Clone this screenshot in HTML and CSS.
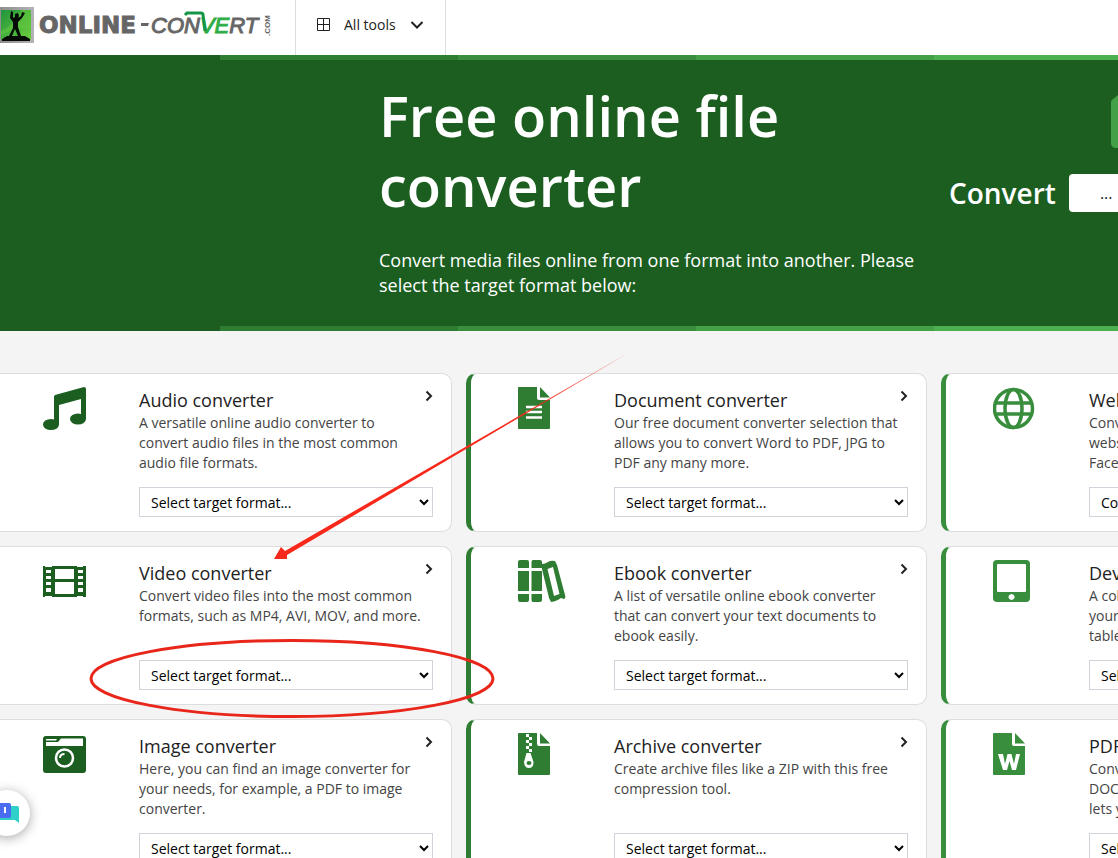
FILE: index.html
```html
<!DOCTYPE html>
<html lang="en">
<head>
<meta charset="utf-8">
<title>Online-Convert</title>
<link rel="stylesheet" href="styles.css">
</head>
<body>
<header class="topbar">
  <a class="brand" href="#" aria-label="Online-Convert.com">
    <svg width="274" height="38" viewBox="0 0 274 38">
      <defs>
        <linearGradient id="tile" x1="0" y1="0" x2="1" y2="1"><stop offset="0" stop-color="#20943c"/><stop offset="1" stop-color="#6fd03f"/></linearGradient>
        <linearGradient id="frame"><stop offset="0" stop-color="#8d8d8d"/><stop offset="1" stop-color="#b4b4b8"/></linearGradient>
        <linearGradient id="leaf" x1="0" y1="0" x2="1" y2="0"><stop offset="0" stop-color="#109447"/><stop offset="1" stop-color="#4cc443"/></linearGradient>
      </defs>
      <path d="M0 0h34v36H0z" fill="url(#frame)"/>
      <path d="M1 3h30v30H1z" fill="url(#tile)"/>
      <path d="M1 24C10 20 18 13 21 3h10v18C20 20 12 23 1 28z" fill="#62c83d" opacity=".55"/>
      <path d="M11 4l2 1 0 6 2-1 0-3 3-1 1 3-1 2 3-2 1-4 3 1-3 5-4 4v5l3 9h4l5 3v2H2v-2l5-3h2l4-8V15l-3-4z" fill="#050b05"/>
      <path d="M15 22l-3 7h6z" fill="#47b53c"/>
      <text class="logo-bold" x="39" y="26">ONLINE</text>
      <path d="M141 16h8l-1 3h-7z" fill="#666"/>
      <text class="logo-italic" x="151" y="26">CON<tspan fill="url(#leaf)" stroke="#2bab45">VE</tspan>RT</text>
      <path d="M185 8l2-2h14q2 0 2 2l2 16" fill="none" stroke="#159647" stroke-width="3"/>
      <text class="logo-small" transform="translate(270 29) rotate(-90)">.COM</text>
    </svg>
  </a>
  <button class="tools" type="button">
    <svg width="13" height="13" viewBox="0 0 13 13" fill="none" stroke="#222"><path d="M.5.5h12v12H.5zM6.500.5v12M.5 6.500h12"/></svg>
    <span>All tools</span>
    <svg width="14" height="8" viewBox="0 0 14 8" fill="none" stroke="#222" stroke-width="2"><path d="M1.500 1L7 6.500 12.500 1"/></svg>
  </button>
</header>

<section class="hero">
  <div class="stripes"><i></i><i></i><i></i><i></i></div>
  <div class="hero-body">
    <div class="intro">
      <h1>Free online file converter</h1>
      <p>Convert media files online from one format into another. Please select the target format below:</p>
    </div>
    <div class="quick">
      <svg class="hex" width="60" height="53" viewBox="0 0 60 53"><path d="M0 7q0-1 1-2L7 0h46l7 5v43q0 5-5 5H5q-5 0-5-5z" fill="#43a047"/></svg>
      <div class="quick-row"><span id="quick-label">Convert</span><button type="button" class="quick-pick" aria-labelledby="quick-label">...</button></div>
    </div>
  </div>
  <div class="stripes"><i></i><i></i><i></i><i></i></div>
</section>

<main class="cards">
  <article class="card dark">
    <svg class="icon" viewBox="0 0 48 44"><path d="M11 10q0-1 1-2L41 0q2 0 2 2v30H38V12L16 18v20h-5z"/><ellipse cx="8" cy="37.500" rx="8" ry="5.500"/><ellipse cx="35" cy="32" rx="8" ry="5.500"/></svg>
    <div class="info">
      <h2><label for="f1">Audio converter</label></h2>
      <p>A versatile online audio converter to convert audio files in the most common audio file formats.</p>
      <select id="f1"><option>Select target format...</option></select>
    </div>
    <a class="go" href="#" aria-label="Audio"><svg viewBox="0 0 8 12"><path d="M1.500 1.500L6 6l-4.500 4.500"/></svg></a>
  </article>
  <article class="card mid">
    <svg class="icon" viewBox="0 0 48 44"><path d="M1 0h18v11q0 2 2 2h11v28q0 1-1 1H1q-1 0-1-1V1q0-1 1-1zM22 0l10 10.500H22z"/><path d="M8 20h16M8 25h16M8 30.500h16" stroke="#fff" stroke-width="2.500"/></svg>
    <div class="info">
      <h2><label for="f2">Document converter</label></h2>
      <p>Our free document converter selection that allows you to convert Word to PDF, JPG to PDF any many more.</p>
      <select id="f2"><option>Select target format...</option></select>
    </div>
    <a class="go" href="#" aria-label="Document"><svg viewBox="0 0 8 12"><path d="M1.500 1.500L6 6l-4.500 4.500"/></svg></a>
  </article>
  <article class="card light">
    <svg class="icon" viewBox="0 0 48 44"><g fill="none" stroke="currentColor" stroke-width="3.500"><circle cx="20.500" cy="21.500" r="19"/><ellipse cx="20.500" cy="21.500" rx="8.500" ry="19"/><path d="M3 16h35M3 27h35"/></g></svg>
    <div class="info">
      <h2><label for="f3">Webservice</label></h2>
      <p>Convert<br>webservices<br>Facebook</p>
      <select id="f3"><option>Convert</option></select>
    </div>
  </article>

  <article class="card dark">
    <svg class="icon" viewBox="0 0 48 44"><path fill-rule="evenodd" d="M0 6h2v1h7V6h25v1h6V6h3v31h-3v-1h-6v1H9v-1H2v1H0zM12 9v10h19V9zM12 22v12h19V22zM3 10v3h5v-3zM3 16v3h5v-3zM3 22v3h5v-3zM3 28v4h5v-4zM35 10v3h5v-3zM35 16v3h5v-3zM35 22v3h5v-3zM35 28v4h5v-4z"/></svg>
    <div class="info">
      <h2><label for="f4">Video converter</label></h2>
      <p>Convert video files into the most common formats, such as MP4, AVI, MOV, and more.</p>
      <select id="f4"><option>Select target format...</option></select>
    </div>
    <a class="go" href="#" aria-label="Video"><svg viewBox="0 0 8 12"><path d="M1.500 1.500L6 6l-4.500 4.500"/></svg></a>
  </article>
  <article class="card mid">
    <svg class="icon" viewBox="0 0 48 44"><path d="M2 0h7q2 0 2 2v6H0V2q0-2 2-2zM0 11h11v20H0zM0 34h11v6q0 2-2 2H2q-2 0-2-2zM15 0h7q2 0 2 2v6H13.500V2q0-2 1.500-2zM13.500 11H24v20H13.500zM13.500 34H24v6q0 2-2 2h-7q-1.500 0-1.500-2z"/><path fill-rule="evenodd" d="M24 4q3 0 6-2 3-2 7-1l2 4 8 30q1 3-1 4l-3-1q-4 3-7 3.500l-3 .5-2-4-7-29zM29.500 9l6.500 27 5.500-2L35 7z"/></svg>
    <div class="info">
      <h2><label for="f5">Ebook converter</label></h2>
      <p>A list of versatile online ebook converter that can convert your text documents to ebook easily.</p>
      <select id="f5"><option>Select target format...</option></select>
    </div>
    <a class="go" href="#" aria-label="Ebook"><svg viewBox="0 0 8 12"><path d="M1.500 1.500L6 6l-4.500 4.500"/></svg></a>
  </article>
  <article class="card light">
    <svg class="icon" viewBox="0 0 48 44"><path fill-rule="evenodd" d="M4 0h29q4 0 4 4v34q0 4-4 4H4q-4 0-4-4V4q0-4 4-4zM5 4q-1 0-1 1v26q0 1 1 1h27q1 0 1-1V5q0-1-1-1zM18.500 34a3 3 0 1 0 .1 0z"/></svg>
    <div class="info">
      <h2><label for="f6">Device</label></h2>
      <p>A collection<br>your<br>tablet</p>
      <select id="f6"><option>Select target format...</option></select>
    </div>
  </article>

  <article class="card dark">
    <svg class="icon" viewBox="0 0 48 44"><rect y="3" width="43" height="37" rx="3"/><path d="M3 9h12l3-3.500h22V13H3zM3 6h11l-1 1.500H3z" fill="#fff"/><circle cx="21.500" cy="25" r="8.500" fill="none" stroke="#fff" stroke-width="2.500"/><path d="M17 25q0-4 4.500-4" fill="none" stroke="#fff" stroke-width="2"/></svg>
    <div class="info">
      <h2><label for="f7">Image converter</label></h2>
      <p>Here, you can find an image converter for your needs, for example, a PDF to image converter.</p>
      <select id="f7"><option>Select target format...</option></select>
    </div>
    <a class="go" href="#" aria-label="Image"><svg viewBox="0 0 8 12"><path d="M1.500 1.500L6 6l-4.500 4.500"/></svg></a>
  </article>
  <article class="card mid">
    <svg class="icon" viewBox="0 0 48 44"><path d="M1 0h18v11q0 2 2 2h11v28q0 1-1 1H1q-1 0-1-1V1q0-1 1-1zM22 0l10 10.500H22z"/><path d="M8 1h3v3H8zM11 4h3v3h-3zM8 7h3v3H8zM11 10h3v3h-3zM8 13h3v3H8zM11 16h3v3h-3zM8.500 20h4L15.500 29q0 6-4.500 6t-5-6z" fill="#fff"/><ellipse cx="11" cy="30" rx="2.500" ry="2"/></svg>
    <div class="info">
      <h2><label for="f8">Archive converter</label></h2>
      <p>Create archive files like a ZIP with this free compression tool.</p>
      <select id="f8"><option>Select target format...</option></select>
    </div>
    <a class="go" href="#" aria-label="Archive"><svg viewBox="0 0 8 12"><path d="M1.500 1.500L6 6l-4.500 4.500"/></svg></a>
  </article>
  <article class="card light">
    <svg class="icon" viewBox="0 0 48 44"><path d="M1 0h18v11q0 2 2 2h11v28q0 1-1 1H1q-1 0-1-1V1q0-1 1-1zM22 0l10 10.500H22z"/><path d="M5 21h5l2 10 2.500-10h4L21 31l2-10h4l-4 16h-4l-2.500-9L14 37h-4z" fill="#fff"/></svg>
    <div class="info">
      <h2><label for="f9">PDF to</label></h2>
      <p>Convert<br>DOCX<br>lets you</p>
      <select id="f9"><option>Select target format...</option></select>
    </div>
  </article>
</main>

<button class="chat" type="button" aria-label="Chat">
  <svg width="28" height="20" viewBox="0 0 28 20"><path d="M8 3h18q2 0 2 2v15l-4-3H8z" fill="#2fd0c8"/><rect width="20" height="15" rx="2" fill="#4a6cf0"/><path d="M13 4h2v6h-2z" fill="#fff"/></svg>
</button>

<svg class="marks" width="1118" height="858" viewBox="0 0 1118 858">
  <defs><linearGradient id="fade" gradientUnits="userSpaceOnUse" x1="628" y1="353" x2="500" y2="428"><stop offset="0" stop-color="#e8261a" stop-opacity=".6"/><stop offset="1" stop-color="#f8281a"/></linearGradient></defs>
  <path d="M630 352L287 555L287 559L274 559L281 547L285 551Z" fill="url(#fade)"/>
  <ellipse cx="292" cy="678.500" rx="201" ry="38" fill="none" stroke="#e8261a" stroke-width="3"/>
</svg>
</body>
</html>
```
FILE: styles.css
```css
* { box-sizing: border-box; }
body {
  margin: 0;
  position: relative;
  height: 100vh;
  overflow: hidden;
  background: #f4f4f4;
  color: #222;
  font-family: "Open Sans", "Noto Sans", sans-serif;
}
h1, h2, p { margin: 0; }
button { font-family: inherit; color: inherit; border: 0; padding: 0; cursor: pointer; }

.topbar { display: flex; height: 55px; background: #fff; }
.brand { width: 295px; padding-top: 7px; }
.brand svg { display: block; }
.logo-bold { font: bold 23px "DejaVu Sans", sans-serif; fill: #666; stroke: #666; stroke-width: 1px; }
.logo-italic { font: italic 22px "Liberation Sans", sans-serif; fill: #666; stroke: #666; stroke-width: 1px; }
.logo-small { font: bold 8px "Liberation Sans", sans-serif; fill: #666; }
.tools {
  display: flex;
  align-items: center;
  gap: 14px;
  padding: 0 21px 6px;
  background: #fff;
  border: solid #ddd;
  border-width: 0 1px;
  font-size: 14px;
}

.hero { background: #1b5e20; }
.stripes { display: flex; height: 5px; padding-left: 220px; }
.stripes i { flex: 0 0 238px; background: #2e7d32; }
.stripes i:nth-child(2) { background: #388e3c; }
.stripes i:nth-child(3) { background: #43a047; }
.stripes i:nth-child(4) { background: #4caf50; }
.hero-body {
  display: flex;
  gap: 24px;
  height: 266px;
  padding: 20px 0 0 379px;
  color: #fff;
  overflow: hidden;
}
.intro { flex: 0 0 546px; }
.intro h1 { font-size: 56px; line-height: 70px; font-weight: 600; }
.intro p { margin-top: 28px; font-size: 18px; line-height: 25px; }
.quick { flex: none; padding-top: 15px; }
.hex { display: block; margin-left: 162px; }
.quick-row { display: flex; align-items: center; gap: 13px; margin-top: 26px; font-size: 28px; line-height: 38px; font-weight: 600; }
.quick-pick { width: 130px; height: 38px; padding-left: 31px; text-align: left; border-radius: 4px; background: #fff; color: #222; font-size: 16px; }

.cards {
  display: grid;
  grid-template-columns: repeat(3, 461px);
  grid-auto-rows: 159px;
  gap: 14px;
  margin: 42px 0 0 -9px;
}
.card {
  display: flex;
  padding: 13px 18px 0 47px;
  background: #fff;
  border: 1px solid #ddd;
  border-left: 5px solid;
  border-radius: 10px;
  position: relative;
}
.dark { border-left-color: #1b5e20; }
.mid { border-left-color: #2e7d32; }
.light { border-left-color: #388e3c; }
.icon { flex: none; width: 48px; height: 44px; margin-right: 48px; fill: currentColor; }
.dark .icon { color: #1b5e20; }
.mid .icon { color: #2e7d32; }
.light .icon { color: #388e3c; }
.info { flex: 1; display: flex; flex-direction: column; padding-bottom: 14px; }
.info h2 { font-size: 18px; line-height: 26px; font-weight: 500; }
.info p { flex: 1; padding-right: 8px; font-size: 14px; line-height: 20px; color: #444; }
.info select {
  width: 100%;
  height: 30px;
  padding-left: 7px;
  background: #fff;
  border: 1px solid #ced4da;
  border-radius: 0;
  color: #000;
  font: 14px "Open Sans", sans-serif;
}
.go { position: absolute; top: 16px; right: 18px; line-height: 0; }
.go svg { width: 8px; height: 12px; fill: none; stroke: #222; stroke-width: 2; }

.chat {
  position: absolute;
  left: -16px;
  bottom: 22px;
  width: 46px;
  height: 46px;
  border-radius: 50%;
  background: #fff;
  box-shadow: 0 2px 12px rgba(0, 0, 0, .35);
}
.chat svg { margin: 4px 4px 0 0; }
.marks { position: absolute; left: 0; top: 0; pointer-events: none; }
```
